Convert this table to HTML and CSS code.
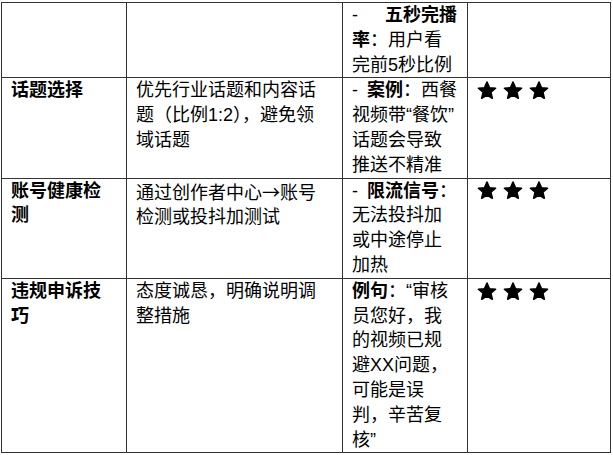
FILE: index.html
```html
<!DOCTYPE html>
<html lang="zh-CN">
<head>
<meta charset="utf-8">
<title>运营要点</title>
<link rel="stylesheet" href="styles.css">
</head>
<body>
<table class="grid">
  <colgroup>
    <col class="c-name">
    <col class="c-method">
    <col class="c-note">
    <col class="c-rate">
  </colgroup>
  <tbody>
    <tr>
      <td class="name"></td>
      <td class="method"></td>
      <td class="note"><span class="dash dash-wide">-</span><b>五秒完播率</b>：用户看完前5秒比例</td>
      <td class="rate"></td>
    </tr>
    <tr>
      <td class="name">话题选择</td>
      <td class="method">优先行业话题和内容话题（比例1:2），避免领域话题</td>
      <td class="note"><span class="dash">-</span><b>案例</b>：西餐视频带“餐饮”&#8203;话题会导致推送不精准</td>
      <td class="rate">
        <div class="stars">
          <svg class="star" viewBox="0 0 20 19"><polygon points="10,1 12.41,6.68 18.56,7.22 13.9,11.27 15.29,17.28 10,14.1 4.71,17.28 6.1,11.27 1.44,7.22 7.59,6.68"/></svg>
          <svg class="star" viewBox="0 0 20 19"><polygon points="10,1 12.41,6.68 18.56,7.22 13.9,11.27 15.29,17.28 10,14.1 4.71,17.28 6.1,11.27 1.44,7.22 7.59,6.68"/></svg>
          <svg class="star" viewBox="0 0 20 19"><polygon points="10,1 12.41,6.68 18.56,7.22 13.9,11.27 15.29,17.28 10,14.1 4.71,17.28 6.1,11.27 1.44,7.22 7.59,6.68"/></svg>
        </div>
      </td>
    </tr>
    <tr>
      <td class="name">账号健康检测</td>
      <td class="method">通过创作者中心<span class="arrow">→</span>账号检测或投抖加测试</td>
      <td class="note"><span class="dash">-</span><b>限流信号</b>：无法投抖加或中途停止加热</td>
      <td class="rate">
        <div class="stars">
          <svg class="star" viewBox="0 0 20 19"><polygon points="10,1 12.41,6.68 18.56,7.22 13.9,11.27 15.29,17.28 10,14.1 4.71,17.28 6.1,11.27 1.44,7.22 7.59,6.68"/></svg>
          <svg class="star" viewBox="0 0 20 19"><polygon points="10,1 12.41,6.68 18.56,7.22 13.9,11.27 15.29,17.28 10,14.1 4.71,17.28 6.1,11.27 1.44,7.22 7.59,6.68"/></svg>
          <svg class="star" viewBox="0 0 20 19"><polygon points="10,1 12.41,6.68 18.56,7.22 13.9,11.27 15.29,17.28 10,14.1 4.71,17.28 6.1,11.27 1.44,7.22 7.59,6.68"/></svg>
        </div>
      </td>
    </tr>
    <tr>
      <td class="name">违规申诉技巧</td>
      <td class="method">态度诚恳，明确说明调整措施</td>
      <td class="note"><b>例句</b>：“审核员您好，我的视频已规避XX问题，可能是误判，辛苦复核”</td>
      <td class="rate">
        <div class="stars">
          <svg class="star" viewBox="0 0 20 19"><polygon points="10,1 12.41,6.68 18.56,7.22 13.9,11.27 15.29,17.28 10,14.1 4.71,17.28 6.1,11.27 1.44,7.22 7.59,6.68"/></svg>
          <svg class="star" viewBox="0 0 20 19"><polygon points="10,1 12.41,6.68 18.56,7.22 13.9,11.27 15.29,17.28 10,14.1 4.71,17.28 6.1,11.27 1.44,7.22 7.59,6.68"/></svg>
          <svg class="star" viewBox="0 0 20 19"><polygon points="10,1 12.41,6.68 18.56,7.22 13.9,11.27 15.29,17.28 10,14.1 4.71,17.28 6.1,11.27 1.44,7.22 7.59,6.68"/></svg>
        </div>
      </td>
    </tr>
  </tbody>
</table>
</body>
</html>
```

FILE: styles.css
```css
html, body {
  margin: 0;
  padding: 0;
  background: #ffffff;
}

.grid {
  border-collapse: collapse;
  table-layout: fixed;
  width: 609px;
  margin: 2px 0 0 1px;
  font-family: "Liberation Sans", "Noto Sans CJK SC", sans-serif;
  font-size: 18px;
  line-height: 24.8px;
  color: #000000;
}

.c-name { width: 125px; }
.c-method { width: 216px; }
.c-note { width: 125px; }
.c-rate { width: 143px; }

.grid td {
  border: 1px solid #333333;
  padding: 0 9px;
  vertical-align: top;
  line-break: strict;
}

.grid td.method {
  padding-right: 14px;
}

.grid td.note {
  padding-right: 8px;
}

.grid td.name {
  font-weight: 700;
}

.grid b {
  font-weight: 700;
}

.dash {
  display: inline-block;
  box-sizing: border-box;
  width: 15px;
}

.dash-wide {
  width: 33px;
}

.arrow {
  font-family: "Noto Sans CJK SC", sans-serif;
}

.stars {
  display: flex;
  align-items: center;
  gap: 6px;
  height: 24.8px;
}

.star {
  width: 20px;
  height: 19px;
  display: block;
}

.star polygon {
  fill: #000000;
  stroke: #000000;
  stroke-width: 1.6;
  stroke-linejoin: round;
}
```
